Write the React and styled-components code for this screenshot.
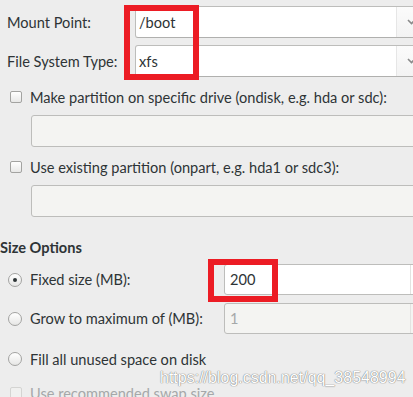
import styled, { createGlobalStyle } from 'styled-components';

const Global = createGlobalStyle`
  html, body {
    margin: 0;
    padding: 0;
    background: #ededed;
    overflow: hidden;
  }
  body {
    font-family: Lato, "DejaVu Sans", sans-serif;
    font-size: 14.6px;
    color: #2e3436;
  }
`;

const Page = styled.div`
  position: relative;
  width: 413px;
  height: 397px;
  overflow: hidden;
  padding-top: 6px;
  box-sizing: border-box;
`;

const FieldGrid = styled.div`
  display: grid;
  grid-template-columns: 128px 290px;
  grid-auto-rows: 32px;
  row-gap: 7px;
  padding-left: 7px;
  align-items: center;
`;

const Label = styled.span`
  white-space: nowrap;
  color: ${(p) => (p.$disabled ? '#a5a8a9' : '#2e3436')};
`;

const Combo = styled.div`
  display: flex;
  height: 32px;
  box-sizing: border-box;
  border: 1px solid #bdbdbb;
  border-bottom-color: #b0b0ae;
  border-radius: 3px;
  background: #fff;
`;

const ComboText = styled.div`
  flex: 1;
  display: flex;
  align-items: center;
  padding: 0 3px;
`;

const ComboButton = styled.div`
  width: 28px;
  display: flex;
  align-items: center;
  padding-left: 10px;
  box-sizing: border-box;
  border-left: 1px solid #e6e6e6;
  background: linear-gradient(#fbfbfb, #f3f3f3);
  color: #8a8a8a;
`;

const Group = styled.div`
  padding-left: 10px;
  margin-top: 10px;
`;

const CheckRow = styled.label`
  display: flex;
  align-items: center;
  height: 20px;
  gap: 8px;
  white-space: nowrap;
`;

const Box = styled.span`
  width: 12px;
  height: 12px;
  box-sizing: border-box;
  border: 1px solid ${(p) => (p.$disabled ? '#d4d4d2' : '#a3a3a1')};
  border-radius: 2px;
  background: ${(p) => (p.$disabled ? '#f0f0ef' : 'linear-gradient(#ffffff, #e8e8e7)')};
  flex-shrink: 0;
`;

const Entry = styled.div`
  display: flex;
  align-items: center;
  height: 32px;
  box-sizing: border-box;
  margin: 8px 0 0 21px;
  width: 420px;
  border: 1px solid #bdbdbb;
  border-radius: 3px;
  background: #f4f4f2;
`;

const SectionTitle = styled.div`
  font-weight: bold;
  height: 20px;
  line-height: 20px;
  margin-top: 21px;
`;

const SizeGrid = styled.div`
  display: flex;
  flex-direction: column;
  padding-left: 8px;
  margin-top: 6px;
`;

const OptionRow = styled.div`
  display: grid;
  grid-template-columns: 216px 200px;
  align-items: center;
  height: ${(p) => p.$h}px;
  margin-top: ${(p) => p.$top || 0}px;
`;

const RadioLabel = styled.label`
  display: flex;
  align-items: center;
  gap: 8px;
  white-space: nowrap;
`;

const Radio = styled.span`
  position: relative;
  width: 14px;
  height: 14px;
  box-sizing: border-box;
  border: 1px solid #a3a3a1;
  border-radius: 50%;
  background: linear-gradient(#ffffff, #e6e6e5);
  flex-shrink: 0;

  &::after {
    content: '';
    display: ${(p) => (p.$checked ? 'block' : 'none')};
    position: absolute;
    left: 4px;
    top: 4px;
    width: 4px;
    height: 4px;
    border-radius: 50%;
    background: #2e3436;
  }
`;

const Spin = styled.div`
  display: flex;
  height: 31px;
  box-sizing: border-box;
  border: 1px solid #bdbdbb;
  border-radius: 3px;
  background: ${(p) => (p.$disabled ? '#f4f4f2' : '#fff')};
  color: ${(p) => (p.$disabled ? '#a5a8a9' : '#2e3436')};
`;

const SpinText = styled.div`
  width: 186px;
  display: flex;
  align-items: center;
  padding-left: 5px;
  box-sizing: border-box;
  border-right: 1px solid #e3e3e1;
`;

const SwapRow = styled(CheckRow)`
  padding-left: 2px;
  margin-top: 14px;
`;

const Highlight = styled.div`
  position: absolute;
  left: ${(p) => p.$x}px;
  top: ${(p) => p.$y}px;
  width: ${(p) => p.$w}px;
  height: ${(p) => p.$h}px;
  box-sizing: border-box;
  border: 6px solid #ec1c24;
`;

const Watermark = styled.div`
  position: absolute;
  left: 160px;
  top: 369px;
  font-family: "Liberation Sans", Arial, sans-serif;
  font-size: 16px;
  color: #ffffff;
  text-shadow: 0 0 1px rgba(110, 110, 110, 0.9), 0 0 1px rgba(110, 110, 110, 0.9);
  white-space: nowrap;
`;

const Chevron = () => (
  <svg width="9" height="6" viewBox="0 0 9 6">
    <path d="M1 1 L4.5 4.5 L8 1" fill="none" stroke="currentColor" strokeWidth="1.6" />
  </svg>
);

const ComboBox = ({ value }) => (
  <Combo>
    <ComboText>{value}</ComboText>
    <ComboButton>
      <Chevron />
    </ComboButton>
  </Combo>
);

export default function App() {
  return (
    <Page>
      <Global />
      <FieldGrid>
        <Label>Mount Point:</Label>
        <ComboBox value="/boot" />
        <Label>File System Type:</Label>
        <ComboBox value="xfs" />
      </FieldGrid>

      <Group>
        <CheckRow>
          <Box />
          Make partition on specific drive (ondisk, e.g. hda or sdc):
        </CheckRow>
        <Entry />
      </Group>

      <Group>
        <CheckRow>
          <Box />
          Use existing partition (onpart, e.g. hda1 or sdc3):
        </CheckRow>
        <Entry />
      </Group>

      <SectionTitle>Size Options</SectionTitle>
      <SizeGrid>
        <OptionRow $h={31}>
          <RadioLabel>
            <Radio $checked />
            Fixed size (MB):
          </RadioLabel>
          <Spin>
            <SpinText>200</SpinText>
          </Spin>
        </OptionRow>
        <OptionRow $h={31} $top={8}>
          <RadioLabel>
            <Radio />
            Grow to maximum of (MB):
          </RadioLabel>
          <Spin $disabled>
            <SpinText>1</SpinText>
          </Spin>
        </OptionRow>
        <OptionRow $h={20} $top={15}>
          <RadioLabel>
            <Radio />
            Fill all unused space on disk
          </RadioLabel>
        </OptionRow>
        <SwapRow>
          <Box $disabled />
          <Label $disabled>Use recommended swap size</Label>
        </SwapRow>
      </SizeGrid>

      <Highlight $x={124} $y={5} $w={75} $h={75} />
      <Highlight $x={208} $y={259} $w={70} $h={43} />
      <Watermark>https://blog.csdn.net/qq_38548994</Watermark>
    </Page>
  );
}
